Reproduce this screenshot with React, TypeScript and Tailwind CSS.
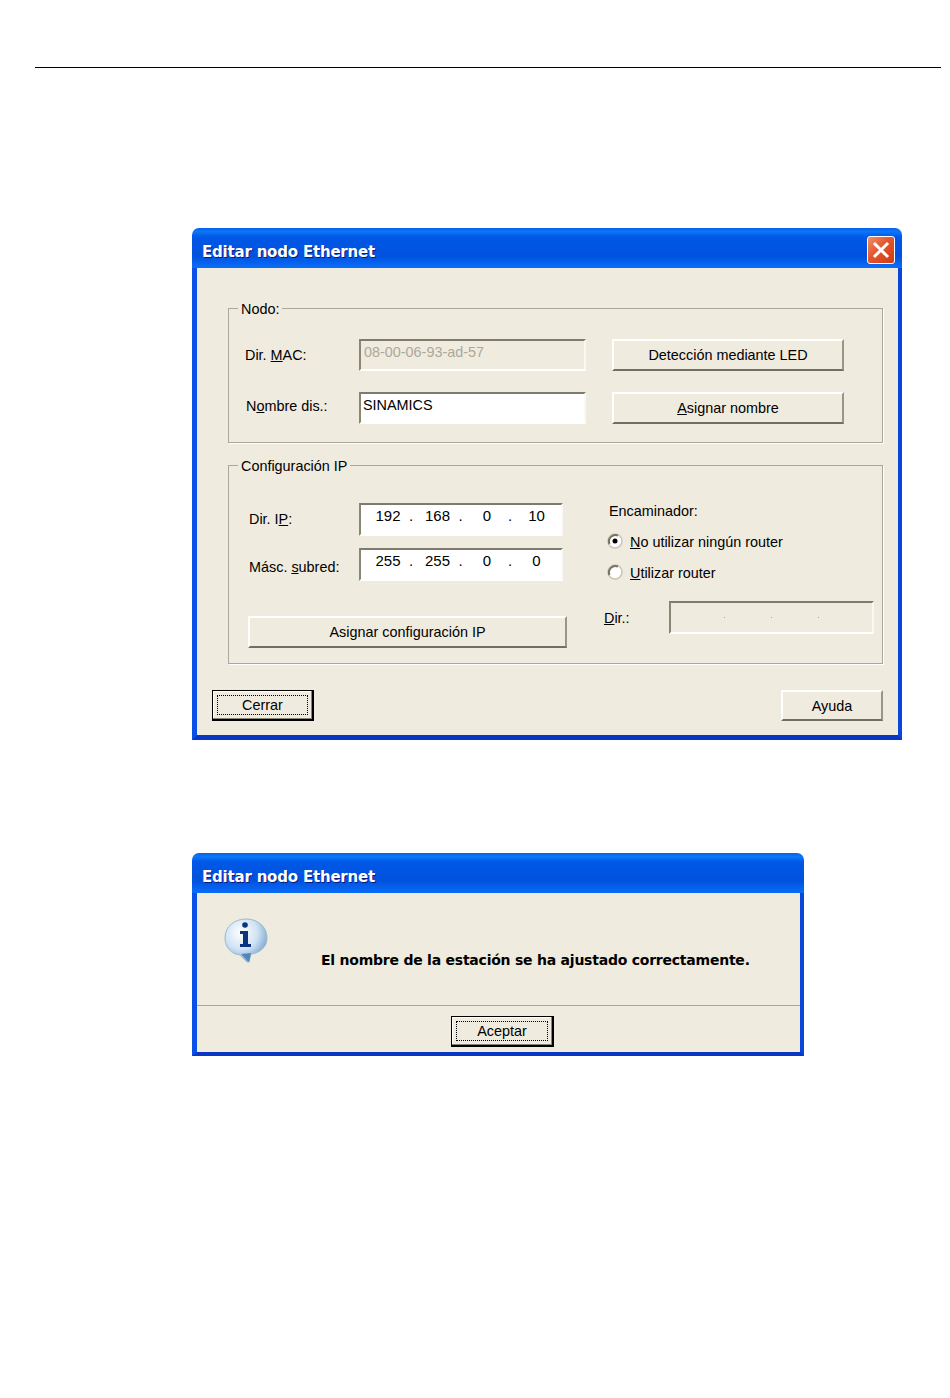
import React from "react";

const sans = "font-['Liberation_Sans',Arial,sans-serif]";
const sunken = "border-2 border-t-[#7f7b6c] border-l-[#8a8674] border-r-[#fbf9f3] border-b-[#ffffff]";

function TitleBar({ close }: { close?: boolean }) {
  return (
    <div className="flex h-[40px] shrink-0 items-center justify-between rounded-t-[7px] bg-[linear-gradient(180deg,#0a5fe8_0%,#0a78fa_9%,#0058e6_22%,#0052de_70%,#0560ec_85%,#0a6ef8_100%)] pl-[10px] pr-[7px]">
      <span className="pt-[8px] font-['DejaVu_Sans',Verdana,sans-serif] text-[15px] font-bold leading-[20px] tracking-[-0.2px] text-white [text-shadow:1px_1px_0_#0a1a80]">
        Editar nodo Ethernet
      </span>
      {close && (
        <span className="mt-[4px] flex h-[28px] w-[28px] items-center justify-center rounded-[3px] border border-white bg-[linear-gradient(135deg,#f0906a_0%,#e4552e_45%,#d03a12_100%)]">
          <svg width="18" height="18" viewBox="0 0 18 18" aria-hidden="true">
            <path d="M3 3 L15 15 M15 3 L3 15" stroke="#ffffff" strokeWidth="3" strokeLinecap="square" fill="none" />
          </svg>
        </span>
      )}
    </div>
  );
}

function Btn({ className, children }: { className: string; children: React.ReactNode }) {
  return (
    <div
      className={`flex items-center justify-center border-2 border-t-[#ffffff] border-l-[#ffffff] border-r-[#9a9686] border-b-[#716f64] text-[14.4px] leading-[18px] text-black ${className}`}
    >
      {children}
    </div>
  );
}

function FocusBtn({ className, children }: { className: string; children: React.ReactNode }) {
  return (
    <div className={`border border-b-2 border-r-2 border-black bg-[#f0ebdf] p-[4px] shadow-[inset_-1px_-1px_0_#8a8674,inset_1px_1px_0_#fff] ${className}`}>
      <div className="flex h-full w-full items-center justify-center border border-dotted border-black text-[14.4px] leading-[18px] text-black">
        {children}
      </div>
    </div>
  );
}

function IpField({ parts }: { parts: string[] }) {
  return (
    <div className={`flex h-[33px] w-[204px] bg-white pl-[9px] pt-px ${sunken}`}>
      {parts.map((p, i) => (
        <React.Fragment key={i}>
          <span className="w-[36px] text-center text-[15px] leading-[20px] text-black">{p}</span>
          {i < 3 && <span className="w-[13.5px] pl-[3px] text-[15px] leading-[20px] text-black">.</span>}
        </React.Fragment>
      ))}
    </div>
  );
}

function Radio({ checked }: { checked?: boolean }) {
  return (
    <svg width="16" height="16" viewBox="0 0 16 16" className="shrink-0" aria-hidden="true">
      <circle cx="8" cy="8" r="7" fill="#fff" stroke="#c9c5b4" strokeWidth="1.5" />
      <path d="M2.5 11 A6.5 6.5 0 0 1 11 2.5" fill="none" stroke="#77735f" strokeWidth="2" />
      {checked && <circle cx="8" cy="8" r="2.5" fill="#000" />}
    </svg>
  );
}

function InfoIcon() {
  return (
    <svg width="44" height="45" viewBox="0 0 44 45" aria-label="Información" role="img">
      <defs>
        <radialGradient id="bub" cx="38%" cy="32%" r="72%">
          <stop offset="0%" stopColor="#ffffff" />
          <stop offset="55%" stopColor="#cfe2f3" />
          <stop offset="100%" stopColor="#6f9fcb" />
        </radialGradient>
      </defs>
      <path
        d="M22 1 C33 1 43 8 43 20 C43 29 36 35 27 36 L25 44 L23 44 L16 37 C7 36 1 29 1 20 C1 8 11 1 22 1 Z"
        fill="url(#bub)"
        stroke="#9ab8d3"
        strokeWidth="1"
      />
      <path d="M27 35 L25 44 L17 36 Z" fill="#4f86bb" />
      <circle cx="21" cy="7" r="2.8" fill="#0a3480" />
      <path d="M16 13 H24 V26 H27 V29 H16 V26 H19 V16 H16 Z" fill="#0a3480" />
    </svg>
  );
}

export default function App() {
  return (
    <div className={`h-[1398px] w-[950px] overflow-hidden bg-white ${sans}`}>
      <div className="ml-[35px] mt-[67px] h-px w-[906px] bg-black" />

      <section className="ml-[192px] mt-[160px] flex h-[512px] w-[710px] flex-col">
        <TitleBar close />
        <div className="flex flex-1 flex-col border-b-[5px] border-l-[5px] border-r-[4px] border-b-[#0a36c4] border-l-[#0a50e6] border-r-[#0a46dc] bg-[#f0ebdf] pl-[31px] pr-[15px]">
          <fieldset className="mt-[31px] h-[144px] border border-[#aca899] pl-[16px] shadow-[1px_1px_0_#fff]">
            <legend className="ml-[-7px] h-[18px] px-[3px] pt-px text-[14.4px] leading-[18px] text-black">Nodo:</legend>
            <div className="mt-[22px] grid grid-cols-[114px_227px_232px] grid-rows-[32px_32px] items-center gap-y-[21px]">
              <span className="text-[14.4px] leading-[18px] text-black">
                Dir. <u>M</u>AC:
              </span>
              <div className={`flex h-[32px] items-start bg-[#f0ebdf] pl-[3px] pt-px text-[14.4px] leading-[20px] text-[#aca899] ${sunken}`}>
                08-00-06-93-ad-57
              </div>
              <Btn className="ml-[26px] h-[32px] w-[232px]">Detección mediante LED</Btn>
              <span className="pb-[4px] pl-px text-[14.4px] leading-[18px] text-black">
                N<u>o</u>mbre dis.:
              </span>
              <div className={`flex h-[32px] items-start bg-white pl-[2px] pt-px text-[14.4px] leading-[20px] text-black ${sunken}`}>
                SINAMICS
              </div>
              <Btn className="ml-[26px] h-[32px] w-[232px]">
                <span>
                  <u>A</u>signar nombre
                </span>
              </Btn>
            </div>
          </fieldset>

          <fieldset className="mt-[13px] h-[208px] border border-[#aca899] shadow-[1px_1px_0_#fff]">
            <legend className="ml-[9px] h-[18px] px-[3px] pt-px text-[14.4px] leading-[18px] text-black">Configuración IP</legend>
            <div className="flex">
              <div className="ml-[19px] mt-[29px] flex w-[319px] flex-col">
                <div className="flex items-center">
                  <span className="w-[111px] pb-[2px] pl-px text-[14.4px] leading-[18px] text-black">
                    Dir. I<u>P</u>:
                  </span>
                  <IpField parts={["192", "168", "0", "10"]} />
                </div>
                <div className="mt-[12px] flex items-center">
                  <span className="w-[111px] pl-px pt-[5px] text-[14.4px] leading-[18px] text-black">
                    Másc. <u>s</u>ubred:
                  </span>
                  <IpField parts={["255", "255", "0", "0"]} />
                </div>
                <Btn className="mt-[35px] h-[32px] w-[319px]">Asignar configuración IP</Btn>
              </div>
              <div className="ml-[37px] mt-[29px] flex flex-col">
                <span className="ml-[5px] mt-[-1px] text-[14.4px] leading-[18px] text-black">Encaminador:</span>
                <div className="ml-[3px] mt-[12px] flex h-[18px] items-center gap-[7px] text-[14.4px] leading-[18px] text-black">
                  <Radio checked />
                  <span className="translate-y-px">
                    <u>N</u>o utilizar ningún router
                  </span>
                </div>
                <div className="ml-[3px] mt-[13px] flex h-[18px] items-center gap-[7px] text-[14.4px] leading-[18px] text-black">
                  <Radio />
                  <span className="translate-y-px">
                    <u>U</u>tilizar router
                  </span>
                </div>
                <div className="mt-[20px] flex items-center">
                  <span className="w-[65px] text-[14.4px] leading-[18px] text-black">
                    <u>D</u>ir.:
                  </span>
                  <div className={`flex h-[33px] w-[205px] items-center justify-around bg-[#f0ebdf] px-[30px] ${sunken}`}>
                    <span className="h-px w-px bg-[#aca899]" />
                    <span className="h-px w-px bg-[#aca899]" />
                    <span className="h-px w-px bg-[#aca899]" />
                  </div>
                </div>
              </div>
            </div>
          </fieldset>

          <div className="mt-[26px] flex items-start justify-between">
            <FocusBtn className="ml-[-16px] h-[31px] w-[102px]">Cerrar</FocusBtn>
            <Btn className="h-[31px] w-[102px]">Ayuda</Btn>
          </div>
        </div>
      </section>

      <section className="ml-[192px] mt-[113px] flex h-[203px] w-[612px] flex-col">
        <TitleBar />
        <div className="flex flex-1 flex-col border-b-[4px] border-l-[5px] border-r-[4px] border-b-[#0a36c4] border-l-[#0a50e6] border-r-[#0a46dc] bg-[#f0ebdf]">
          <div className="flex h-[113px] shrink-0 border-b border-[#aca899] pl-[27px] pt-[25px]">
            <InfoIcon />
            <p className="ml-[53px] mt-[32px] font-['DejaVu_Sans',Verdana,sans-serif] text-[14px] font-bold leading-[20px] tracking-[-0.23px] text-black">
              El nombre de la estación se ha ajustado correctamente.
            </p>
          </div>
          <div className="flex flex-1 items-start pl-[254px] pt-[10px]">
            <FocusBtn className="h-[31px] w-[103px]">Aceptar</FocusBtn>
          </div>
        </div>
      </section>
    </div>
  );
}
